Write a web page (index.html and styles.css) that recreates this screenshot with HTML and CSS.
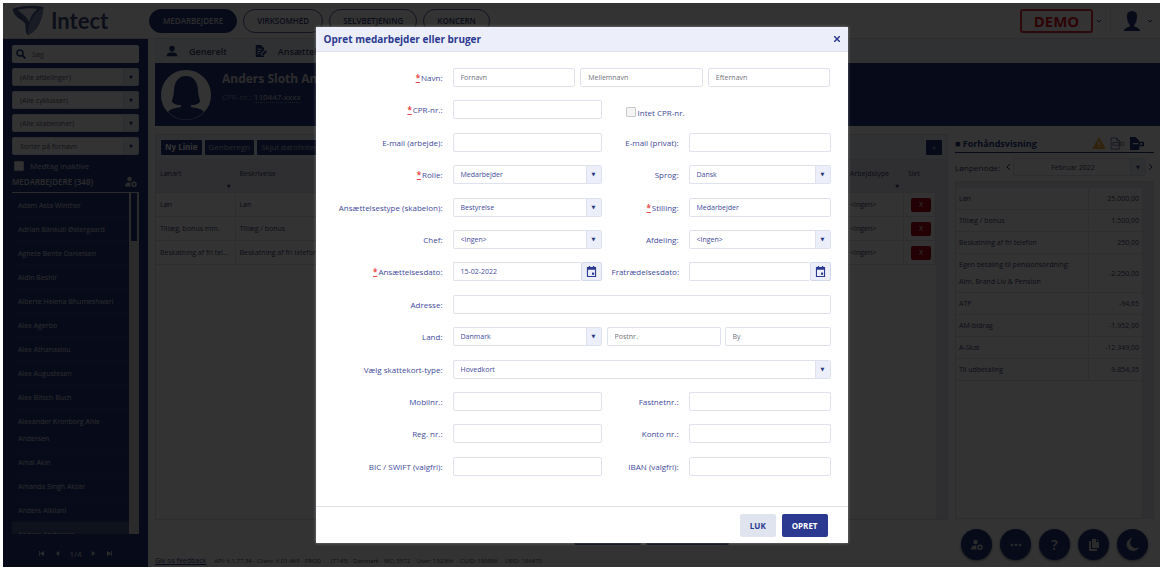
FILE: index.html
```
<!DOCTYPE html>
<html lang="da">
<head>
    <meta charset="UTF-8">
    <meta name="viewport" content="width=device-width, initial-scale=1.0">
    <title>Intect - Opret medarbejder</title>
    <link rel="stylesheet" href="styles.css">
</head>
<body>
    <!-- Shared icons -->
    <svg class="sprite" aria-hidden="true">
        <symbol id="icon-user" viewBox="0 0 16 16">
            <path d="M8 1a3.600 3.600 0 0 1 3.600 3.800C11.600 7 10 9 8 9S4.400 7 4.400 4.800A3.600 3.600 0 0 1 8 1zM1 15c0-3.500 2-5 4.500-5h5c2.500 0 4.500 1.500 4.500 5z"/>
        </symbol>
        <symbol id="icon-user-cog" viewBox="0 0 16 16">
            <circle cx="6" cy="4" r="3"/>
            <path d="M0 14c0-4 2-5.500 4.500-5.500h3c-1 2-1 4 .5 5.500z"/>
            <circle cx="12" cy="11" r="2.700" fill="none" stroke="currentColor" stroke-width="2"/>
        </symbol>
        <symbol id="icon-calendar" viewBox="0 0 12 12">
            <path d="M1 1h2V0h1.500v1h3V0H9v1h2v11H1zM2.200 4v6.800h7.600V4z" fill-rule="evenodd"/>
            <path d="M6.500 7.200h2.400v2.400H6.500z"/>
        </symbol>
        <symbol id="icon-contract" viewBox="0 0 16 16">
            <path d="M1 0h7l4 4v3L8 11v3h4v2H1zM3 5v1.300h6V5zM3 8v1.300h4.500V8zM3 11v1.300h3V11z" fill-rule="evenodd"/>
            <path d="M9.500 11.500L14 7l2 2-4.500 4.500h-2z"/>
        </symbol>
    </svg>

    <div class="app">
        <header class="topbar">
            <a class="logo" href="#">
                <svg viewBox="0 0 34 32" width="34" height="31" aria-hidden="true">
                    <path d="M1 4C10 0 24 0 33 2 32 14 28 26 17 31 14 29 15 25 14 19 12 15 3 14 1 4z" fill="#4a5690"/>
                    <path d="M6 5c8-2 15-2 21-1-4 3-7 7-9 14C17 13 11 9 6 5z" fill="#dfe2ea"/>
                    <path d="M33 2C32 14 28 26 17 31c-1-8 3-21 16-29z" fill="#7f8ab5"/>
                </svg>
                <span>Intect</span>
            </a>
            <nav class="menu">
                <a class="menu-item active" href="#">MEDARBEJDERE</a>
                <a class="menu-item" href="#">VIRKSOMHED</a>
                <a class="menu-item" href="#">SELVBETJENING</a>
                <a class="menu-item" href="#">KONCERN</a>
            </nav>
            <div class="account">
                <button class="demo" type="button">DEMO</button>
                <svg class="chevron" viewBox="0 0 6 4" aria-hidden="true"><path d="M1 1l2 2 2-2"/></svg>
                <button class="profile-button" type="button" aria-label="Profil">
                    <svg viewBox="0 0 20 24" width="20" height="22" aria-hidden="true">
                        <path d="M10 1c4 0 6 3 5.500 7-.3 4-1.500 7-3 8v2c3 1 6 2 6.500 5H1c.5-3 3.500-4 6.500-5v-2c-1.500-1-2.700-4-3-8C4 4 6 1 10 1z" fill="#26367f"/>
                    </svg>
                </button>
                <svg class="chevron" viewBox="0 0 6 4" aria-hidden="true"><path d="M1 1l2 2 2-2"/></svg>
            </div>
        </header>

        <div class="layout">
            <aside class="sidebar">
                <label class="search">
                    <svg viewBox="0 0 10 10" width="10" height="10" aria-hidden="true">
                        <circle cx="4" cy="4" r="3" fill="none" stroke="#26367f" stroke-width="1.500"/>
                        <path d="M6 6l3.500 3.500" stroke="#26367f" stroke-width="1.800"/>
                    </svg>
                    <input type="text" placeholder="Søg" aria-label="Søg">
                </label>
                <div class="select"><select aria-label="Afdeling"><option>(Alle afdelinger)</option></select></div>
                <div class="select"><select aria-label="Cyklus"><option>(Alle cyklusser)</option></select></div>
                <div class="select"><select aria-label="Skabelon"><option>(Alle skabeloner)</option></select></div>
                <div class="select"><select aria-label="Sortering"><option>Sortér på fornavn</option></select></div>
                <label class="check inactive"><input type="checkbox"> Medtag inaktive</label>
                <h2 class="list-title">
                    MEDARBEJDERE (348)
                    <svg width="12" height="12" aria-hidden="true"><use href="#icon-user-cog"/></svg>
                </h2>
                <div class="list-box">
                    <ul class="employees">
                        <li>Adam Asta Winther</li>
                        <li>Adrian Bánkuti Østergaard</li>
                        <li>Agnete Bente Danielsen</li>
                        <li>Aidin Beshir</li>
                        <li>Alberte Helena Bhumeshwari</li>
                        <li>Alex Agerbo</li>
                        <li>Alex Athanasiou</li>
                        <li>Alex Augustesen</li>
                        <li>Alex Bitsch Buch</li>
                        <li>Alexander Kronborg Ahle Andersen</li>
                        <li>Amal Akin</li>
                        <li>Amanda Singh Akzar</li>
                        <li>Anders Alkilani</li>
                        <li class="selected">Anders Andersen</li>
                    </ul>
                    <div class="scrollbar"><div class="thumb"></div></div>
                </div>
                <div class="pager">
                    <button type="button" aria-label="Første"><svg viewBox="0 0 6 6" aria-hidden="true"><path d="M0 0h1v6H0zM6 0v6L1 3z"/></svg></button>
                    <button type="button" aria-label="Forrige"><svg viewBox="0 0 6 6" aria-hidden="true"><path d="M5 0v6L1 3z"/></svg></button>
                    <span>1/4</span>
                    <button type="button" aria-label="Næste"><svg viewBox="0 0 6 6" aria-hidden="true"><path d="M1 0v6l4-3z"/></svg></button>
                    <button type="button" aria-label="Sidste"><svg viewBox="0 0 6 6" aria-hidden="true"><path d="M5 0h1v6H5zM0 0v6l5-3z"/></svg></button>
                </div>
            </aside>

            <main class="content">
                <nav class="tabs">
                    <a href="#"><svg width="12" height="12" aria-hidden="true"><use href="#icon-user"/></svg>Generelt</a>
                    <a href="#"><svg width="12" height="12" aria-hidden="true"><use href="#icon-contract"/></svg>Ansættelse</a>
                </nav>
                <section class="person">
                    <svg viewBox="0 0 52 52" width="52" height="52" aria-hidden="true">
                        <circle cx="26" cy="26" r="24" fill="#ffffff" stroke="#ffffff" stroke-width="2"/>
                        <path d="M26 7c9 0 12 8 12 15 0 4 2 8 2 11-3 3-6 3-9 3v2c6 1 11 2 13 5a25 25 0 0 1-36 0c2-3 7-4 13-5v-2c-3 0-6 0-9-3 0-3 2-7 2-11 0-7 3-15 12-15z" fill="#26367f"/>
                    </svg>
                    <div class="person-text">
                        <h1>Anders Sloth Andersen</h1>
                        <p>CPR-nr.: <span class="cpr">110447-xxxx</span> <span class="born">Født: 11-04-1947</span></p>
                    </div>
                </section>

                <div class="panels">
                    <div class="lines-column">
                        <section class="lines">
                            <div class="toolbar">
                                <button class="primary" type="button">Ny Linie</button>
                                <button type="button">Genberegn</button>
                                <button type="button">Skjul datofelter</button>
                                <button class="expand" type="button">»</button>
                            </div>
                            <table class="line-table">
                                <thead>
                                    <tr><th class="c-type">Lønart<i>▼</i></th><th>Beskrivelse</th><th class="c-work">Arbejdstype<i>▼</i></th><th class="c-del">Slet</th><th class="c-bar"></th></tr>
                                </thead>
                                <tbody>
                                    <tr><td>Løn</td><td>Løn</td><td>&lt;Ingen&gt;</td><td><button type="button">X</button></td><td></td></tr>
                                    <tr><td>Tillæg, bonus mm.</td><td>Tillæg / bonus</td><td>&lt;Ingen&gt;</td><td><button type="button">X</button></td><td></td></tr>
                                    <tr><td>Beskatning af fri tel...</td><td>Beskatning af fri telefon</td><td>&lt;Ingen&gt;</td><td><button type="button">X</button></td><td></td></tr>
                                </tbody>
                            </table>
                            <div class="table-rest"></div>
                        </section>
                        <div class="line-actions">
                            <button type="button" aria-label="Gem"></button>
                            <button type="button" aria-label="Annuller"></button>
                        </div>
                    </div>

                    <section class="preview">
                        <h2 class="preview-title">
                            <span>■ Forhåndsvisning</span>
                            <svg viewBox="0 0 14 12" width="14" height="12" aria-hidden="true"><path d="M7 0l7 12H0z" fill="#ffa838"/><path d="M6.300 4h1.400v4H6.300zM6.300 9h1.400v1.400H6.300z" fill="#ffffff"/></svg>
                            <svg class="outline" viewBox="0 0 16 14" width="15" height="13" aria-hidden="true"><path d="M1 1h6l3 3v9H1zM7 1v3h3M3 6h7v3H3z"/><circle cx="13" cy="7.500" r="2"/></svg>
                            <svg viewBox="0 0 16 14" width="15" height="13" aria-hidden="true"><path d="M1 0h6l4 4v1h5v5h-5v4H1zM4 6.500v1.200h6V6.500zM12 6.500v2h2v-2z" fill-rule="evenodd"/></svg>
                        </h2>
                        <div class="period">
                            <label for="period">Lønperiode:</label>
                            <button type="button" aria-label="Forrige periode"><svg viewBox="0 0 6 8" aria-hidden="true"><path d="M5 1L2 4l3 3"/></svg></button>
                            <div class="select"><select id="period"><option>Februar 2022</option></select></div>
                            <button type="button" aria-label="Næste periode"><svg viewBox="0 0 6 8" aria-hidden="true"><path d="M1 1l3 3-3 3"/></svg></button>
                        </div>
                        <div class="preview-box">
                            <table>
                                <thead><tr><th></th><th class="c-sum"></th></tr></thead>
                                <tbody>
                                    <tr><td>Løn</td><td>25.000,00</td></tr>
                                    <tr><td>Tillæg / bonus</td><td>1.500,00</td></tr>
                                    <tr><td>Beskatning af fri telefon</td><td>250,00</td></tr>
                                    <tr><td>Egen betaling til pensionsordning:<br>Alm. Brand Liv &amp; Pension</td><td>-2.250,00</td></tr>
                                    <tr><td>ATP</td><td>-94,65</td></tr>
                                    <tr><td>AM-bidrag</td><td>-1.952,00</td></tr>
                                    <tr><td>A-Skat</td><td>-12.349,00</td></tr>
                                    <tr><td>Til udbetaling</td><td>9.854,35</td></tr>
                                </tbody>
                            </table>
                        </div>
                    </section>
                </div>

                <footer class="status">
                    <a href="#">Giv os feedback</a>
                    <span>API: 6.1.77.34 - Client: 6.01.469 - PROD - &nbsp;. (7145) - Danmark - MC: 3572 &nbsp;- User: 132366 &nbsp;- CUID: 190886 &nbsp;- UEID: 186470</span>
                </footer>
            </main>
        </div>

        <!-- Floating shortcuts -->
        <div class="shortcuts">
            <button type="button" aria-label="Brugere"><svg width="12" height="12" aria-hidden="true"><use href="#icon-user-cog"/></svg></button>
            <button type="button" aria-label="Mere"><svg viewBox="0 0 12 12" width="12" height="12" aria-hidden="true"><circle cx="2" cy="6" r="1.300"/><circle cx="6" cy="6" r="1.300"/><circle cx="10" cy="6" r="1.300"/></svg></button>
            <button type="button" class="help">?</button>
            <button type="button" aria-label="Kopier"><svg viewBox="0 0 12 12" width="12" height="12" aria-hidden="true"><path d="M4 0h4v3h3v6H4zM9 0l2 2H9zM1 2h2v8h6v2H1z"/></svg></button>
            <button type="button" aria-label="Mørk tilstand"><svg viewBox="0 0 12 12" width="13" height="13" aria-hidden="true"><path d="M6 0a6 6 0 1 0 6 8.500A5 5 0 0 1 6 0z"/></svg></button>
        </div>

        <div class="overlay"></div>

        <form class="modal" role="dialog" aria-labelledby="modalTitle">
            <div class="modal-header">
                <h2 id="modalTitle">Opret medarbejder eller bruger</h2>
                <button type="button" aria-label="Luk vindue"><svg viewBox="0 0 6 6" width="6" height="6" aria-hidden="true"><path d="M0 0l6 6M6 0L0 6" stroke="#2b3990" stroke-width="1.500"/></svg></button>
            </div>

            <div class="modal-body">
                <label for="firstName"><b>*</b>Navn:</label>
                <div class="wide names">
                    <input type="text" id="firstName" placeholder="Fornavn">
                    <input type="text" placeholder="Mellemnavn" aria-label="Mellemnavn">
                    <input type="text" placeholder="Efternavn" aria-label="Efternavn">
                </div>

                <label for="cpr"><b>*</b>CPR-nr.:</label>
                <input type="text" id="cpr">
                <label class="check no-cpr"><input type="checkbox"> Intet CPR-nr.</label>

                <label for="mailWork">E-mail (arbejde):</label>
                <input type="text" id="mailWork">
                <label for="mailPrivate">E-mail (privat):</label>
                <input type="text" id="mailPrivate">

                <label for="role"><b>*</b>Rolle:</label>
                <div class="select"><select id="role"><option>Medarbejder</option></select></div>
                <label for="language">Sprog:</label>
                <div class="select"><select id="language"><option>Dansk</option></select></div>

                <label for="template">Ansættelsestype (skabelon):</label>
                <div class="select"><select id="template"><option>Bestyrelse</option></select></div>
                <label for="position"><b>*</b>Stilling:</label>
                <input type="text" id="position" value="Medarbejder">

                <label for="manager">Chef:</label>
                <div class="select"><select id="manager"><option>&lt;Ingen&gt;</option></select></div>
                <label for="department">Afdeling:</label>
                <div class="select"><select id="department"><option>&lt;Ingen&gt;</option></select></div>

                <label for="startDate"><b>*</b>Ansættelsesdato:</label>
                <div class="date">
                    <input type="text" id="startDate" value="15-02-2022">
                    <button type="button" aria-label="Vælg dato"><svg width="11" height="11" aria-hidden="true"><use href="#icon-calendar"/></svg></button>
                </div>
                <label for="endDate">Fratrædelsesdato:</label>
                <div class="date">
                    <input type="text" id="endDate">
                    <button type="button" aria-label="Vælg dato"><svg width="11" height="11" aria-hidden="true"><use href="#icon-calendar"/></svg></button>
                </div>

                <label for="address">Adresse:</label>
                <input class="wide" type="text" id="address">

                <label for="country">Land:</label>
                <div class="select"><select id="country"><option>Danmark</option></select></div>
                <div class="city">
                    <input type="text" placeholder="Postnr." aria-label="Postnr.">
                    <input type="text" placeholder="By" aria-label="By">
                </div>

                <label for="taxCard">Vælg skattekort-type:</label>
                <div class="select wide"><select id="taxCard"><option>Hovedkort</option></select></div>

                <label for="mobile">Mobilnr.:</label>
                <input type="text" id="mobile">
                <label for="phone">Fastnetnr.:</label>
                <input type="text" id="phone">

                <label for="regNo">Reg. nr.:</label>
                <input type="text" id="regNo">
                <label for="accountNo">Konto nr.:</label>
                <input type="text" id="accountNo">

                <label for="bic">BIC / SWIFT (valgfri):</label>
                <input type="text" id="bic">
                <label for="iban">IBAN (valgfri):</label>
                <input type="text" id="iban">
            </div>

            <div class="modal-footer">
                <button class="cancel" type="button">LUK</button>
                <button class="submit" type="submit">OPRET</button>
            </div>
        </form>
    </div>
</body>
</html>
```
FILE: styles.css
```
* {
    box-sizing: border-box;
}

body {
    margin: 0;
    padding: 3px 3px 2px;
    background: #ffffff;
    font-family: "Open Sans", "Noto Sans", sans-serif;
    font-size: 8px;
    line-height: 17px;
    color: #2b3990;
}

h1, h2, p, ul {
    margin: 0;
    padding: 0;
    font-size: 8px;
}

a {
    color: inherit;
    text-decoration: none;
}

button, input, select {
    margin: 0;
    padding: 0;
    border: none;
    background: none;
    font: inherit;
    color: inherit;
}

button {
    cursor: pointer;
}

svg {
    display: block;
    flex: none;
    fill: currentColor;
}

.sprite {
    position: absolute;
    width: 0;
    height: 0;
}

.app {
    position: relative;
    display: flex;
    flex-direction: column;
    height: calc(100vh - 5px);
    min-height: 480px;
    overflow: hidden;
}

/* Top bar */
.topbar {
    display: flex;
    align-items: center;
    height: 36px;
    flex: none;
    border-bottom: 1px solid #dfe2ea;
}

.logo {
    display: flex;
    align-items: center;
    gap: 6px;
    width: 146px;
    padding-left: 8px;
    font-family: Lato, sans-serif;
    font-size: 22px;
    font-weight: bold;
    color: #3f4a82;
}

.menu {
    display: flex;
    gap: 6px;
}

.menu-item {
    height: 24px;
    padding: 0 13px;
    border: 1px solid #5a64a0;
    border-radius: 12px;
    line-height: 22px;
    font-weight: 600;
    color: #3a4480;
}

.menu-item.active {
    background: #26367f;
    border-color: #26367f;
    color: #d8d8d8;
}

.account {
    display: flex;
    align-items: center;
    gap: 3px;
    margin-left: auto;
    padding-right: 7px;
}

.demo {
    width: 73px;
    height: 24px;
    border: 2px solid #e0303c;
    border-radius: 3px;
    font-size: 15px;
    font-weight: bold;
    line-height: 20px;
    color: #e8101c;
}

.chevron {
    width: 6px;
    height: 4px;
    fill: none;
    stroke: #26367f;
}

.profile-button {
    display: flex;
    justify-content: center;
    align-items: center;
    width: 34px;
    height: 26px;
    margin-left: 5px;
    padding-left: 8px;
    border-left: 1px solid #dfe2ea;
}

.layout {
    display: flex;
    flex: 1;
    min-height: 0;
}

/* Sidebar */
.sidebar {
    display: flex;
    flex-direction: column;
    width: 145px;
    flex: none;
    padding: 6px 9px 0;
    background: #26367f;
    color: #d8d8d8;
}

.search {
    display: flex;
    align-items: center;
    gap: 6px;
    height: 18px;
    margin-bottom: 5px;
    padding: 0 4px;
    flex: none;
    background: #ffffff;
    border-radius: 2px;
}

.search input {
    flex: 1;
    min-width: 0;
    font-size: 7px;
}

::placeholder {
    color: #70737c;
    opacity: 1;
}

.select {
    display: grid;
    height: 19px;
    border: 1px solid #dfe2ee;
    border-radius: 2px;
    background: #ffffff;
    overflow: hidden;
}

.select select {
    grid-area: 1 / 1;
    min-width: 0;
    padding: 0 20px 0 7px;
    appearance: none;
    font-size: 7px;
    line-height: 15px;
}

.select::after {
    content: "▼";
    grid-area: 1 / 1;
    justify-self: end;
    width: 14px;
    background: #eceff9;
    border-left: 1px solid #dfe2ee;
    font-family: "DejaVu Sans", sans-serif;
    font-size: 5px;
    line-height: 17px;
    text-align: center;
    color: #26367f;
    pointer-events: none;
}

.sidebar .select {
    height: 18px;
    margin-bottom: 5px;
    flex: none;
    color: #555a78;
}

.check {
    display: flex;
    align-items: center;
    gap: 2px;
}

.check input {
    appearance: none;
    width: 10px;
    height: 10px;
    border: 1px solid #c8c8c8;
    border-radius: 1px;
    background: #f4f4f4;
}

.inactive {
    height: 11px;
    gap: 6px;
    padding-left: 2px;
}

.list-title {
    display: flex;
    justify-content: space-between;
    align-items: center;
    height: 22px;
    padding-right: 2px;
    flex: none;
    font-weight: 600;
    border-bottom: 1px solid #d8d8d8;
}

.list-box {
    display: flex;
    flex: 1;
    min-height: 0;
}

.employees {
    flex: 1;
    overflow: hidden;
    list-style: none;
    font-size: 7px;
}

.employees li {
    padding: 4px 6px 2px;
    border-bottom: 1px solid #303f85;
    line-height: 17px;
}

.employees .selected {
    background: #4b5690;
}

.scrollbar {
    width: 10px;
    padding: 0 2px;
    background: #d8d8d8;
}

.thumb {
    height: 48px;
    background: #26367f;
}

.pager {
    display: flex;
    justify-content: center;
    align-items: center;
    gap: 7px;
    height: 28px;
    margin-top: 5px;
}

.pager button {
    padding: 2px;
}

.pager svg {
    width: 5px;
    height: 5px;
}

/* Main content */
.content {
    display: flex;
    flex: 1;
    flex-direction: column;
    min-width: 0;
    padding-left: 7px;
}

.tabs {
    display: flex;
    gap: 28px;
    height: 24px;
    padding-left: 11px;
    flex: none;
    background: #f0f3f8;
    font-size: 9px;
    font-weight: 600;
    color: #3d4470;
}

.tabs a {
    display: flex;
    align-items: center;
    gap: 11px;
}

.tabs svg {
    color: #26367f;
}

.person {
    display: flex;
    align-items: center;
    gap: 10px;
    height: 63px;
    padding-left: 5px;
    flex: none;
    background: #26367f;
    color: #d8d8d8;
}

.person-text {
    align-self: flex-start;
    padding-top: 7px;
}

.person h1 {
    font-size: 12px;
}

.person p {
    margin-top: 1px;
    color: #8890b8;
}

.cpr {
    border-bottom: 1px dotted #8890b8;
    color: #d8d8d8;
}

.born {
    margin-left: 12px;
}

.panels {
    display: flex;
    flex: 1;
    gap: 7px;
    min-height: 0;
    padding: 8px 6px 0 0;
}

.lines-column {
    display: flex;
    flex: 1;
    flex-direction: column;
    min-width: 0;
}

.lines {
    display: flex;
    flex: 1;
    flex-direction: column;
    border: 1px solid #dfe2ea;
}

.toolbar {
    display: flex;
    align-items: center;
    gap: 3px;
    height: 24px;
    padding: 0 5px;
    flex: none;
    background: #f0f3f8;
}

.toolbar button {
    height: 15px;
    padding: 0 4px;
    border-radius: 1px;
    background: #26367f;
    line-height: 14px;
    color: #c0c3d0;
}

.toolbar .primary {
    font-weight: bold;
    color: #ffffff;
}

.toolbar .expand {
    width: 16px;
    margin-left: auto;
}

table {
    width: 100%;
    border-collapse: collapse;
    table-layout: fixed;
    font-size: 7px;
    color: #3d4470;
}

.line-table th, .line-table td {
    padding: 0 4px;
    border: 1px solid #e4e7ee;
    border-left: none;
    text-align: left;
    font-weight: normal;
    overflow: hidden;
    white-space: nowrap;
}

.line-table th {
    height: 33px;
    padding-top: 8px;
    background: #e8ecf4;
    line-height: 12px;
}

.line-table th i {
    display: block;
    font-family: "DejaVu Sans", sans-serif;
    font-size: 5px;
    font-style: normal;
    text-align: right;
}

.line-table th:not(:has(i)) {
    padding-bottom: 12px;
}

.line-table td {
    height: 24px;
}

.line-table .c-type {
    width: 79px;
}

.line-table .c-work {
    width: 58px;
}

.line-table .c-del {
    width: 32px;
}

.line-table .c-bar, .line-table td:last-child {
    width: 11px;
    background: #e8ecf4;
}

.line-table button {
    display: block;
    width: 20px;
    height: 14px;
    margin-left: 3px;
    border-radius: 2px;
    background: #b00010;
    line-height: 14px;
    color: #ffffff;
}

.table-rest {
    flex: 1;
    border-right: 11px solid #e8ecf4;
}

.line-actions {
    display: flex;
    justify-content: center;
    gap: 5px;
    height: 25px;
    padding-left: 200px;
    align-items: flex-end;
}

.line-actions button {
    width: 67px;
    height: 20px;
    border-radius: 2px;
    background: #26367f;
}

.line-actions button + button {
    width: 83px;
}

/* Preview panel */
.preview {
    display: flex;
    flex-direction: column;
    width: 199px;
    flex: none;
    padding-bottom: 26px;
    color: #3d4470;
}

.preview-title {
    display: flex;
    align-items: center;
    gap: 4px;
    height: 19px;
    padding-right: 10px;
    border-bottom: 1px solid #26367f;
    font-size: 9px;
    color: #26367f;
}

.preview-title span {
    margin-right: auto;
}

.outline {
    fill: none;
    stroke: #7079a8;
    stroke-width: 1px;
}

.period {
    display: flex;
    align-items: center;
    gap: 2px;
    height: 28px;
}

.period label {
    width: 48px;
}

.period button svg {
    width: 6px;
    height: 8px;
    fill: none;
    stroke: #26367f;
}

.period .select {
    flex: 1;
    height: 18px;
}

.period select {
    text-align: center;
    text-align-last: center;
}

.preview-box {
    flex: 1;
    min-height: 0;
    border: 1px solid #dfe2ea;
    border-right: 12px solid #e8ecf4;
}

.preview th {
    height: 6px;
    padding: 0;
    background: #e8ecf4;
    line-height: 0;
}

.preview .c-sum {
    width: 54px;
}

.preview td {
    padding: 2px 3px;
    border-bottom: 1px solid #e4e7ee;
}

.preview td:last-child {
    border-left: 1px solid #e4e7ee;
    text-align: right;
}

.status {
    display: flex;
    align-items: center;
    gap: 8px;
    height: 13px;
    flex: none;
    margin-top: 9px;
    font-size: 6px;
    line-height: 12px;
    color: #4a4d60;
}

.status a {
    font-size: 7px;
    text-decoration: underline;
    color: #26367f;
}

.shortcuts {
    position: absolute;
    right: 12px;
    bottom: 7px;
    display: flex;
    gap: 8px;
}

.shortcuts button {
    display: flex;
    justify-content: center;
    align-items: center;
    width: 31px;
    height: 31px;
    border-radius: 50%;
    background: #26367f;
    box-shadow: 0 1px 3px rgba(0, 0, 0, 0.5);
    color: #d8d8d8;
}

.shortcuts .help {
    font-size: 15px;
    font-weight: 600;
}

.overlay {
    position: absolute;
    inset: 0;
    background: rgba(0, 0, 0, 0.8);
}

/* Dialog */
.modal {
    position: absolute;
    inset: 24px 0;
    display: flex;
    flex-direction: column;
    width: 90%;
    max-width: 532px;
    margin: 0 auto;
    background: #ffffff;
    box-shadow: 0 0 3px rgba(255, 255, 255, 0.4);
}

.modal-header {
    display: flex;
    justify-content: space-between;
    align-items: center;
    height: 25px;
    padding: 0 8px;
    flex: none;
    background: #eceff9;
    border-bottom: 1px solid #dfe2ee;
}

.modal-header h2 {
    font-size: 10px;
}

.modal-body {
    display: grid;
    grid-template-columns: 117px 149fr 67px 142fr;
    column-gap: 10px;
    align-content: space-between;
    flex: 1;
    padding: 16px 17px 29px 10px;
    color: #3f4b9b;
}

.modal-body > label {
    line-height: 20px;
    text-align: right;
}

.modal-body b {
    margin-right: 1px;
    text-decoration: underline;
    color: #ec4a4a;
}

.modal-body input[type="text"] {
    width: 100%;
    min-width: 0;
    height: 19px;
    padding: 0 7px;
    border: 1px solid #dfe2ee;
    border-radius: 2px;
    font-size: 7px;
}

.wide {
    grid-column: 2 / -1;
}

.names {
    display: grid;
    grid-template-columns: repeat(3, 1fr);
    gap: 5px;
}

.modal-body .no-cpr {
    grid-column: 3 / -1;
    padding: 4px 0 0 14px;
    line-height: 15px;
}

.date {
    display: flex;
}

.date input[type="text"] {
    flex: 1;
    border-right: none;
}

.date button {
    display: flex;
    justify-content: center;
    align-items: center;
    width: 21px;
    height: 19px;
    border: 1px solid #d3d8ea;
    border-radius: 2px;
    background: #eceff9;
    color: #2b3990;
}

.city {
    display: grid;
    grid-column: 3 / -1;
    grid-template-columns: 114fr 106fr;
    gap: 4px;
    margin-left: -5px;
}

.modal-footer {
    display: flex;
    justify-content: flex-end;
    align-items: center;
    gap: 6px;
    height: 37px;
    padding-right: 20px;
    flex: none;
    border-top: 1px solid #dfe2ee;
}

.modal-footer button {
    height: 23px;
    padding: 0 10px;
    border-radius: 2px;
    font-weight: bold;
}

.cancel {
    background: #dfe4ee;
}

.submit {
    background: #2b3990;
    color: #ffffff;
}
```
